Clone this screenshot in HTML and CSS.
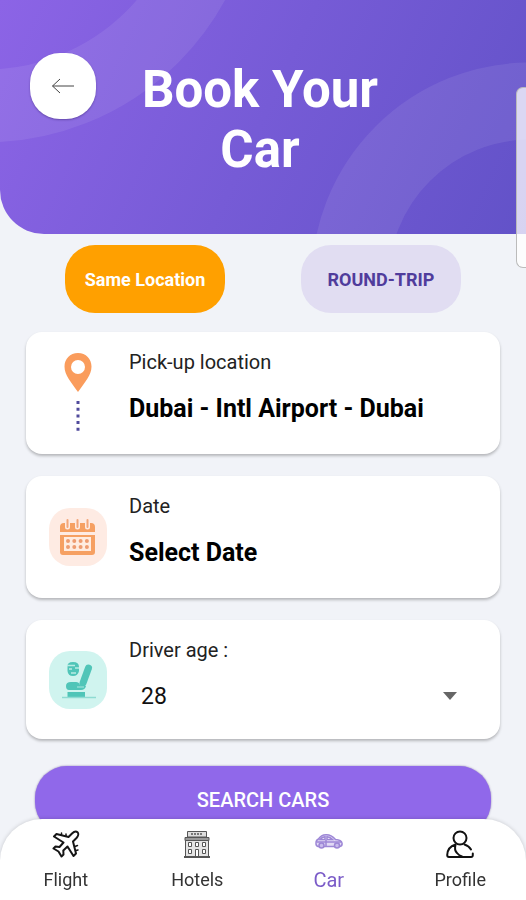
FILE: index.html
```html
<!DOCTYPE html>
<html lang="en">
<head>
<meta charset="utf-8">
<meta name="viewport" content="width=device-width, initial-scale=1">
<title>Book Your Car</title>
<link rel="stylesheet" href="styles.css">
</head>
<body>
<header class="hero">
  <svg class="hero-rings" viewBox="0 0 526 234" preserveAspectRatio="xMidYMid slice" aria-hidden="true">
    <circle cx="-15" cy="-131" r="237" stroke-width="73"/>
    <circle cx="530" cy="281" r="180" stroke-width="77"/>
  </svg>
  <button class="back" type="button" aria-label="Back">
    <svg width="24" height="18" viewBox="0 0 24 18" aria-hidden="true"><path d="M23 9H1.500M9 2 1.500 9 9 16"/></svg>
  </button>
  <h1 class="title">Book Your Car</h1>
</header>
<aside class="edge-handle" aria-hidden="true"></aside>

<main class="content">
  <div class="tabs">
    <button class="tab tab-active" type="button">Same Location</button>
    <button class="tab" type="button">ROUND-TRIP</button>
  </div>

  <form class="form">
    <div class="card">
      <svg class="card-icon" viewBox="0 0 58 84" width="58" height="84" aria-hidden="true">
        <path fill="#fa9c5c" fill-rule="evenodd" d="M29 2C21 2 15.500 8 15.500 15.500C15.500 24 22 31 29 41C36 31 42.500 24 42.500 15.500C42.500 8 37 2 29 2ZM29 9a7 7 0 1 1 0 14a7 7 0 1 1 0-14Z"/>
        <path stroke="#504a9c" stroke-width="3" stroke-dasharray="3 3.700" d="M29 50V80"/>
      </svg>
      <div class="field">
        <label class="label" for="pickup">Pick-up location</label>
        <input class="value" id="pickup" type="text" value="Dubai - Intl Airport - Dubai">
      </div>
    </div>

    <div class="card">
      <svg class="card-icon" viewBox="0 0 58 58" width="58" height="58" aria-hidden="true">
        <rect width="58" height="58" rx="21" fill="#feebe3"/>
        <path fill="#f6a062" d="M11 24V19Q11 15 15 15H42Q46 15 46 19V24ZM11 27H46V44Q46 47 43 47H14Q11 47 11 44Z"/>
        <rect x="15" y="29" width="27" height="14" fill="#ffece0"/>
        <g stroke="#feebe3" stroke-width="5" stroke-linecap="round"><path d="M18.500 12V19M28.500 12V19M38.500 12V19"/></g>
        <g stroke="#f3a678" stroke-width="2" stroke-linecap="round"><path d="M18.500 12V19M28.500 12V19M38.500 12V19"/></g>
        <g stroke="#ee9c70" stroke-width="4" stroke-linecap="round" stroke-dasharray="0 6.300"><path d="M19 33H39M19 39H39"/></g>
      </svg>
      <div class="field">
        <label class="label" for="date">Date</label>
        <input class="value" id="date" type="text" value="Select Date" readonly>
      </div>
    </div>

    <div class="card card-short">
      <svg class="card-icon" viewBox="0 0 58 58" width="58" height="58" aria-hidden="true">
        <rect width="58" height="58" rx="21" fill="#d0f4ef"/>
        <path fill="#50c5b8" d="M18.500 16Q18 11 24 11Q30 11 30 16V20Q29 25 24 25Q19 25 18.500 20Z"/>
        <path fill="none" stroke="#b9ebe4" stroke-width="1.500" d="M18 14.500H26M20 18H23M26 17H30M22 22H27"/>
        <path stroke="#50c5b8" stroke-width="7" stroke-linecap="round" d="M39.500 17 34 32"/>
        <path fill="#50c5b8" d="M17 35Q17 31 22 31H27Q30 31 31 34L37 35Q36 39 32 39H20Q17 39 17 35ZM18.500 41H36V46H18.500Z"/>
        <path stroke="#8edbd2" stroke-width="1.500" d="M13 46.500H47M28 36H35"/>
      </svg>
      <div class="field">
        <label class="label" for="age">Driver age :</label>
        <div class="select-wrap">
          <select class="select" id="age">
            <option>25</option><option>26</option><option>27</option><option selected>28</option><option>29</option><option>30</option>
          </select>
          <svg class="caret" width="14" height="8" viewBox="0 0 14 8" aria-hidden="true"><path fill="#666" d="M0 0H14L7 8Z"/></svg>
        </div>
      </div>
    </div>

    <button class="search" type="submit">SEARCH CARS</button>
  </form>
</main>

<nav class="nav">
  <a class="nav-item" href="#flight">
    <svg width="28" height="28" viewBox="0 0 28 28" fill="none" stroke="#151515" stroke-width="2" stroke-linejoin="round" stroke-linecap="round" aria-hidden="true">
      <path d="M25.500 2.200C24 .8 21.500 2 20 3.500L16.500 7L4.500 4L2 6.500L11.500 12.500L7.500 17L3.500 16.500L1.500 18.500L6.500 21.500L9.500 26.500L11.500 24.500L11.300 20.500L15.500 16.500L21.500 26L24 23.500L21 11.500L24.500 8C26 6.300 27 3.600 25.500 2.200Z"/>
      <path d="M9.500 3V5M14 4V6M25.500 15.500 23 16.500M26 20 24 20.500" stroke-width="1.500"/>
    </svg>
    <span>Flight</span>
  </a>
  <a class="nav-item" href="#hotels">
    <svg width="28" height="28" viewBox="0 0 28 28" fill="none" stroke="#555" aria-hidden="true">
      <path fill="#ddd" d="M4.500 1.500H23.500V7H4.500Z"/>
      <path stroke-width="1.500" d="M8 4H20" stroke-dasharray="2 1"/>
      <path fill="#999" d="M2 7.500H26V10.500H2Z"/>
      <path fill="#e4e4e4" d="M2.500 10.500H25.500V26.500H2.500Z"/>
      <path fill="#fff" d="M5.500 12.500H8.500V16.500H5.500ZM12.500 12.500H15.500V16.500H12.500ZM19.500 12.500H22.500V16.500H19.500ZM5.500 19.500H8.500V23.500H5.500ZM12.500 19.500H15.500V26.500H12.500ZM19.500 19.500H22.500V23.500H19.500Z"/>
      <path stroke-width="2" d="M1 27H27"/>
    </svg>
    <span>Hotels</span>
  </a>
  <a class="nav-item nav-current" href="#car" aria-current="page">
    <svg width="28" height="28" viewBox="0 0 28 28" fill="none" stroke="#9d87d6" stroke-width="1.500" aria-hidden="true">
      <path fill="#e2daf5" d="M3 16.500Q.8 16 1 13Q1 10 3.500 9Q6 5 11 4.800Q16 4.500 20.500 9.500Q26.500 10 27 13Q27.500 16 25 16.500Z"/>
      <path fill="#fff" d="M5 9.500Q7 7 10 6.800V9.500ZM12 6.800Q15 7 17.500 9.500H12Z"/>
      <path d="M2 12H26M11 10V16"/>
      <circle cx="6.500" cy="15.500" r="2.500" fill="#c9bcec"/><circle cx="22" cy="15.500" r="2.500" fill="#c9bcec"/>
    </svg>
    <span>Car</span>
  </a>
  <a class="nav-item" href="#profile">
    <svg width="28" height="28" viewBox="0 0 28 28" fill="none" stroke="#111" stroke-width="2" stroke-linecap="round" stroke-linejoin="round" aria-hidden="true">
      <circle cx="14" cy="8" r="6.500"/>
      <path d="M9.500 14.500Q1.500 17 1.200 25Q1.200 27 3 27H25Q27 27 26.800 24.500V23.500M18.500 14.500Q23 16 25 19.500M9.500 15Q8 20 11 23Q13 25.500 16 26.500"/>
    </svg>
    <span>Profile</span>
  </a>
</nav>
</body>
</html>
```

FILE: styles.css
```css
* { box-sizing: border-box; }

body {
  margin: 0;
  height: 100vh;
  overflow: hidden;
  background: #f1f3f8;
  color: #111;
  font-family: Roboto, "Liberation Sans", sans-serif;
}

button, input, select { font: inherit; color: inherit; border: 0; margin: 0; }
button { cursor: pointer; }

.hero {
  position: relative;
  display: grid;
  grid-template-columns: 66px 1fr 66px;
  align-items: start;
  padding: 53px 36px 54px 30px;
  border-bottom-left-radius: 44px;
  overflow: hidden;
  background: linear-gradient(115deg, #8c64e6 0%, #765bd6 50%, #6252c8 100%);
}

.hero-rings {
  position: absolute;
  inset: 0;
  width: 100%;
  height: 100%;
  fill: none;
  stroke: rgba(255, 255, 255, 0.08);
}

.back {
  position: relative;
  display: grid;
  place-items: center;
  width: 66px;
  height: 66px;
  padding: 0;
  border-radius: 30px;
  background: #fff;
  box-shadow: 0 1px 2px rgba(40, 20, 90, 0.4);
}

.back svg { fill: none; stroke: #444; stroke-width: 1; }

.title {
  position: relative;
  justify-self: center;
  max-width: 260px;
  margin: 7px 0 0;
  color: #fff;
  font-size: 51px;
  line-height: 60px;
  font-weight: 700;
  text-align: center;
}

.edge-handle {
  position: absolute;
  top: 87px;
  right: 0;
  width: 10px;
  height: 181px;
  border: 1px solid #bbb;
  border-right: 0;
  border-radius: 7px 0 0 7px;
  background: rgba(255, 255, 255, 0.75);
}

.content { padding: 11px 26px 0; }

.tabs {
  display: flex;
  justify-content: space-between;
  padding: 0 39px;
}

.tab {
  width: 160px;
  height: 68px;
  padding: 0;
  border-radius: 30px;
  background: #e1ddf2;
  color: #503c9c;
  font-size: 18px;
  font-weight: 700;
}

.tab-active { background: #ffa000; color: #fff; }

.form {
  display: flex;
  flex-direction: column;
  gap: 22px;
  margin-top: 19px;
}

.card {
  display: flex;
  align-items: center;
  gap: 22px;
  height: 122px;
  padding: 0 23px;
  border-radius: 16px;
  background: #fff;
  box-shadow: 0 2px 3px rgba(0, 0, 0, 0.25);
}

.card-short { height: 119px; }
.card-icon { flex: none; }

.field {
  flex: 1;
  align-self: flex-start;
  display: flex;
  flex-direction: column;
  gap: 16px;
  min-width: 0;
  padding-top: 16px;
}

.label { color: #222; font-size: 20px; line-height: 28px; }

.value {
  width: 100%;
  height: 32px;
  padding: 0;
  background: transparent;
  color: #000;
  font-size: 25px;
  font-weight: 700;
  outline: 0;
}

.select-wrap {
  display: grid;
  align-items: center;
}

.select, .caret { grid-area: 1 / 1; }

.select {
  width: 100%;
  height: 32px;
  padding: 0 12px;
  appearance: none;
  background: transparent;
  font-size: 23px;
}

.caret { justify-self: end; margin-right: 20px; pointer-events: none; }

.search {
  height: 68px;
  margin: 5px 9px 0;
  border-radius: 32px;
  background: #9068ea;
  box-shadow: 0 0 2px rgba(60, 30, 120, 0.6);
  color: #fff;
  font-size: 20px;
  font-weight: 500;
}

.nav {
  position: fixed;
  inset: auto 0 0;
  display: grid;
  grid-template-columns: repeat(4, 1fr);
  height: 81px;
  padding-top: 11px;
  border-radius: 42px 42px 0 0;
  background: #fff;
  box-shadow: 0 0 4px rgba(0, 0, 0, 0.18);
}

.nav-item {
  display: flex;
  flex-direction: column;
  align-items: center;
  gap: 10px;
  color: #333;
  font-size: 18px;
  line-height: 24px;
  text-decoration: none;
}

.nav-current { color: #7b5cc8; font-size: 20px; }
```
